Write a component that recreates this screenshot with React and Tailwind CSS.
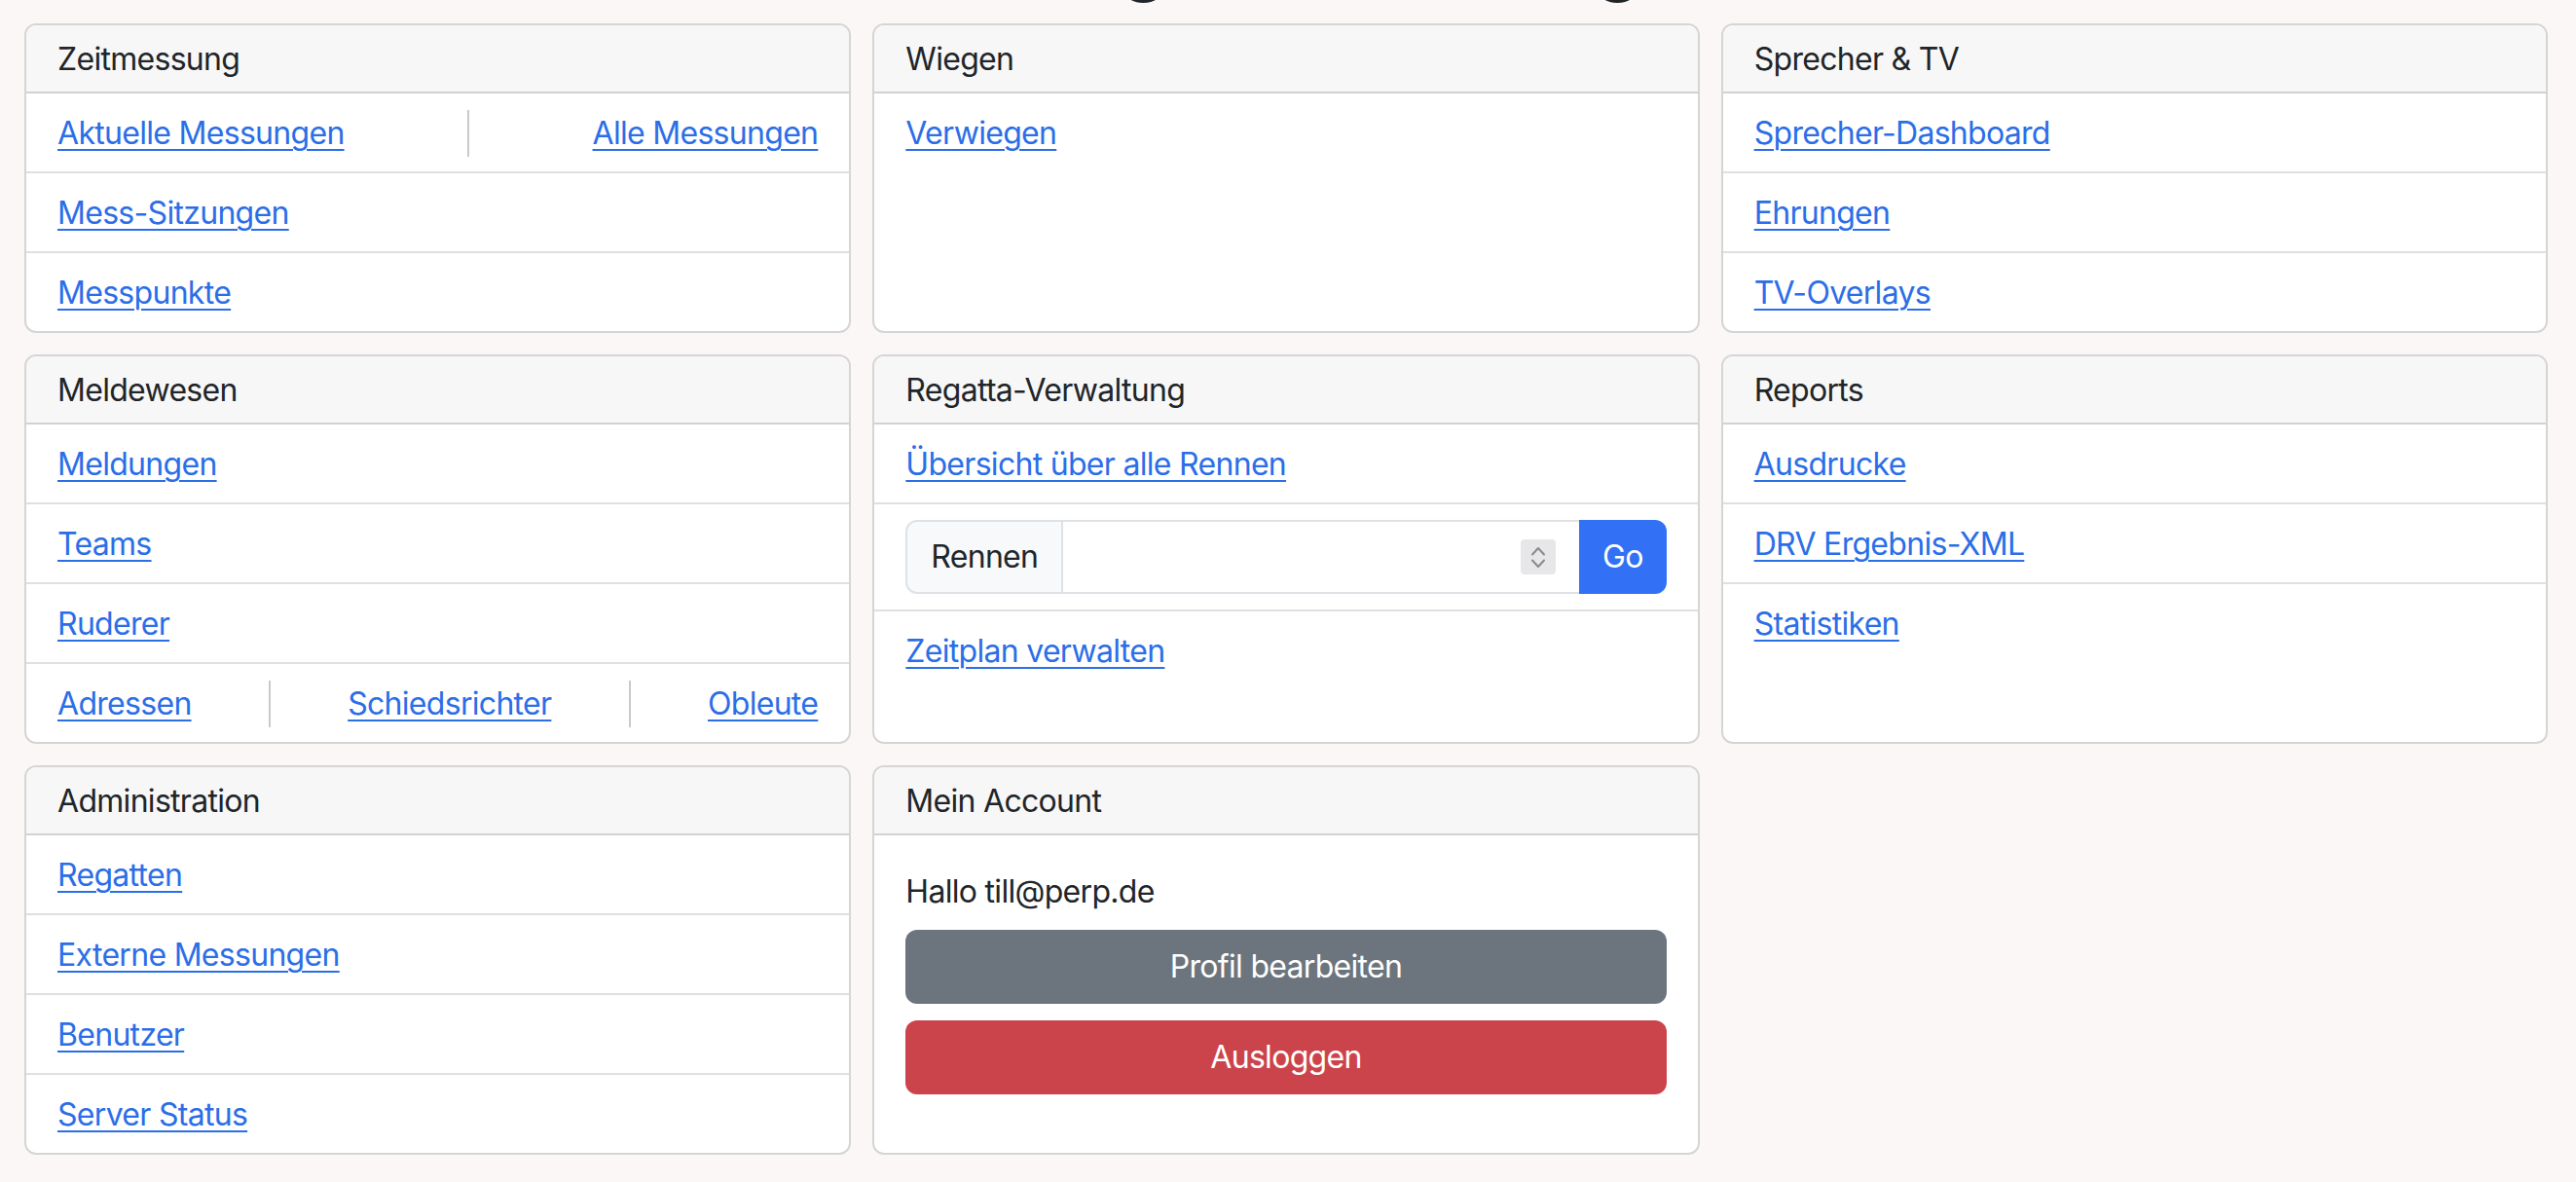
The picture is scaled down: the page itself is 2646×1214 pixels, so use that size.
import React from "react";

const linkCls =
  "text-[#2b6ee8] underline underline-offset-[5px] decoration-[2px] decoration-[#2b6ee8]";

function Card({ title, children }) {
  return (
    <div className="flex flex-col overflow-hidden rounded-[12px] border-2 border-[#d5d5d5] bg-white">
      <div className="border-b-2 border-[#d2d2d2] bg-[#f7f7f7] px-[32px] pb-[15px] pt-[17px] leading-[36px] text-[#212529]">
        {title}
      </div>
      {children}
    </div>
  );
}

function Item({ children, className = "" }) {
  return (
    <div
      className={
        "border-b-2 border-[#e0e0e0] px-[32px] pb-[15px] pt-[17px] leading-[48px] last:border-b-0 " +
        className
      }
    >
      {children}
    </div>
  );
}

function L({ children }) {
  return (
    <a href="#" className={linkCls}>
      {children}
    </a>
  );
}

function Vr() {
  return <div className="w-[2px] self-stretch bg-[#c9cacb]" />;
}

function Spinner() {
  return (
    <div className="flex h-[36px] w-[36px] flex-col items-center justify-center gap-[3px] rounded-[4px] bg-[#e7e7e9]">
      <svg width="16" height="10" viewBox="0 0 16 10" fill="none">
        <path d="M2 8.5 L8 2 L14 8.5" stroke="#8a8a8e" strokeWidth="2" strokeLinecap="round" strokeLinejoin="round" />
      </svg>
      <svg width="16" height="10" viewBox="0 0 16 10" fill="none">
        <path d="M2 1.5 L8 8 L14 1.5" stroke="#8a8a8e" strokeWidth="2" strokeLinecap="round" strokeLinejoin="round" />
      </svg>
    </div>
  );
}

export default function App() {
  return (
    <div
      className="min-h-[1214px] w-full overflow-hidden bg-[#fcf7f7] text-[32px] tracking-[-0.7px] text-[#212529]"
      style={{ fontFamily: "Inter, 'Noto Sans', sans-serif" }}
    >
      <div className="h-[24px] overflow-hidden">
        <h1 className="-mt-[91px] whitespace-nowrap pr-[132px] text-center text-[80px] font-medium leading-[96px] tracking-[4.5px] text-[#212529]">
          Dashboard Regatta-Management
        </h1>
      </div>
      <div className="grid grid-cols-3 gap-[22px] pb-[28px] pl-[25px] pr-[29px]">
        <Card title="Zeitmessung">
          <Item className="flex justify-between">
            <L>Aktuelle Messungen</L>
            <Vr />
            <L>Alle Messungen</L>
          </Item>
          <Item>
            <L>Mess-Sitzungen</L>
          </Item>
          <Item>
            <L>Messpunkte</L>
          </Item>
        </Card>
        <Card title="Wiegen">
          <Item>
            <L>Verwiegen</L>
          </Item>
        </Card>
        <Card title="Sprecher & TV">
          <Item>
            <L>Sprecher-Dashboard</L>
          </Item>
          <Item>
            <L>Ehrungen</L>
          </Item>
          <Item>
            <L>TV-Overlays</L>
          </Item>
        </Card>

        <Card title="Meldewesen">
          <Item>
            <L>Meldungen</L>
          </Item>
          <Item>
            <L>Teams</L>
          </Item>
          <Item>
            <L>Ruderer</L>
          </Item>
          <Item className="flex justify-between">
            <L>Adressen</L>
            <Vr />
            <L>Schiedsrichter</L>
            <Vr />
            <L>Obleute</L>
          </Item>
        </Card>
        <Card title="Regatta-Verwaltung">
          <Item>
            <L>Übersicht über alle Rennen</L>
          </Item>
          <div className="border-b-2 border-[#e0e0e0] px-[32px] py-[16px]">
            <div className="flex h-[76px]">
              <div className="flex items-center rounded-l-[12px] border-2 border-[#dee2e6] bg-[#f8f9fa] px-[24px] text-[#212529]">
                Rennen
              </div>
              <div className="flex flex-1 items-center justify-end border-y-2 border-[#dee2e6] bg-white pr-[24px]">
                <Spinner />
              </div>
              <button className="rounded-r-[12px] bg-[#3271f5] px-[24px] text-white">
                Go
              </button>
            </div>
          </div>
          <Item>
            <L>Zeitplan verwalten</L>
          </Item>
        </Card>
        <Card title="Reports">
          <Item>
            <L>Ausdrucke</L>
          </Item>
          <Item>
            <L>DRV Ergebnis-XML</L>
          </Item>
          <Item>
            <L>Statistiken</L>
          </Item>
        </Card>

        <Card title="Administration">
          <Item>
            <L>Regatten</L>
          </Item>
          <Item>
            <L>Externe Messungen</L>
          </Item>
          <Item>
            <L>Benutzer</L>
          </Item>
          <Item>
            <L>Server Status</L>
          </Item>
        </Card>
        <Card title="Mein Account">
          <div className="flex flex-col p-[32px]">
            <p className="mb-[15px] mt-[2px] leading-[48px]">Hallo till@perp.de</p>
            <button className="h-[76px] rounded-[12px] bg-[#6c757d] text-white">
              Profil bearbeiten
            </button>
            <button className="mt-[17px] h-[76px] rounded-[12px] bg-[#cc444b] text-white">
              Ausloggen
            </button>
          </div>
        </Card>
      </div>
    </div>
  );
}
